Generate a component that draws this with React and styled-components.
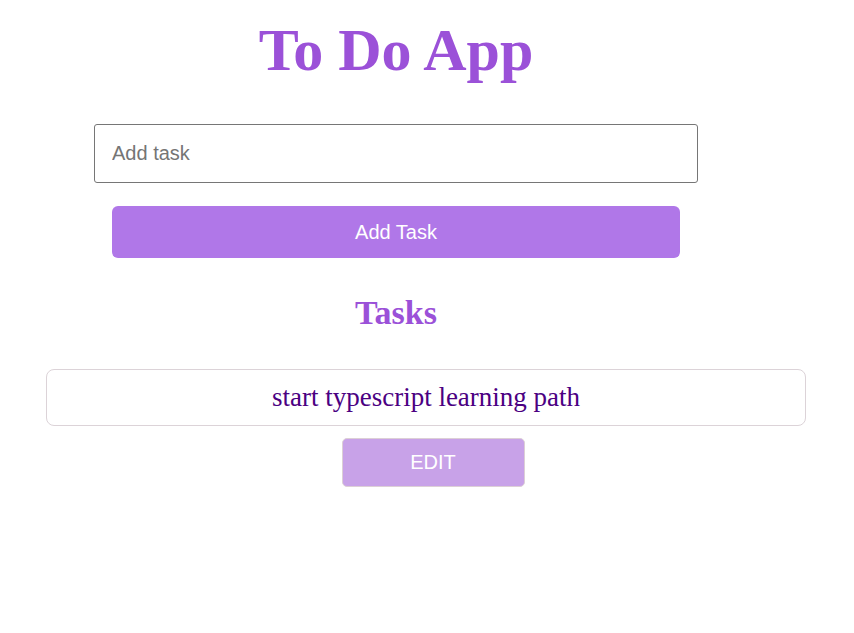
import { useState } from 'react';
import styled, { createGlobalStyle } from 'styled-components';

const GlobalStyle = createGlobalStyle`
  body {
    margin: 0;
    background: #ffffff;
    font-family: 'Liberation Serif', 'Times New Roman', serif;
  }
`;

const App = () => {
  const [task, setTask] = useState('');
  const [tasks, setTasks] = useState(['start typescript learning path']);

  const addTask = (e) => {
    e.preventDefault();
    if (!task.trim()) return;
    setTasks([...tasks, task]);
    setTask('');
  };

  return (
    <StyledPage>
      <GlobalStyle />
      <Top>
        <Title>To Do App</Title>
        <Form onSubmit={addTask}>
          <TaskInput
            placeholder='Add task'
            value={task}
            onChange={(e) => setTask(e.target.value)}
          />
          <AddButton type='submit'>Add Task</AddButton>
        </Form>
        <Heading>Tasks</Heading>
      </Top>
      <List>
        {tasks.map((t, i) => (
          <Item key={i}>
            <TaskCard>{t}</TaskCard>
            <EditButton>EDIT</EditButton>
          </Item>
        ))}
      </List>
    </StyledPage>
  );
};

const StyledPage = styled.div`
  display: flex;
  flex-direction: column;
  padding-top: 16px;
`;

const Top = styled.div`
  width: 792px;
  display: flex;
  flex-direction: column;
  align-items: center;
`;

const Title = styled.h1`
  margin: 0;
  font-size: 60px;
  font-weight: bold;
  color: #9b51d8;
`;

const Form = styled.form`
  margin-top: 39px;
  display: flex;
  flex-direction: column;
  align-items: center;
  gap: 23px;
`;

const TaskInput = styled.input`
  box-sizing: border-box;
  width: 604px;
  height: 59px;
  padding: 0 17px;
  border: 1px solid #767676;
  border-radius: 3px;
  font-family: 'Liberation Sans', Arial, sans-serif;
  font-size: 20px;
  color: #333;
  outline: none;
  &::placeholder {
    color: #757575;
  }
`;

const AddButton = styled.button`
  width: 568px;
  height: 52px;
  border: none;
  border-radius: 6px;
  background: #b077e8;
  color: #ffffff;
  font-family: 'Liberation Sans', Arial, sans-serif;
  font-size: 20px;
  cursor: pointer;
`;

const Heading = styled.h2`
  margin: 36px 0 0;
  font-size: 34px;
  font-weight: bold;
  color: #9b51d8;
`;

const List = styled.div`
  margin: 37px 48px 0 46px;
  display: flex;
  flex-direction: column;
  gap: 16px;
`;

const Item = styled.div`
  display: flex;
  flex-direction: column;
  align-items: center;
  gap: 12px;
`;

const TaskCard = styled.div`
  box-sizing: border-box;
  width: 100%;
  height: 57px;
  display: flex;
  align-items: center;
  justify-content: center;
  border: 1px solid #dcd3d8;
  border-radius: 8px;
  font-size: 27px;
  color: #4b0082;
`;

const EditButton = styled.button`
  box-sizing: border-box;
  width: 183px;
  height: 49px;
  margin-left: 14px;
  border: 1px solid #dccfd6;
  border-radius: 5px;
  background: #c8a2e8;
  color: #ffffff;
  font-family: 'Liberation Sans', Arial, sans-serif;
  font-size: 20px;
  cursor: pointer;
`;

export default App;
